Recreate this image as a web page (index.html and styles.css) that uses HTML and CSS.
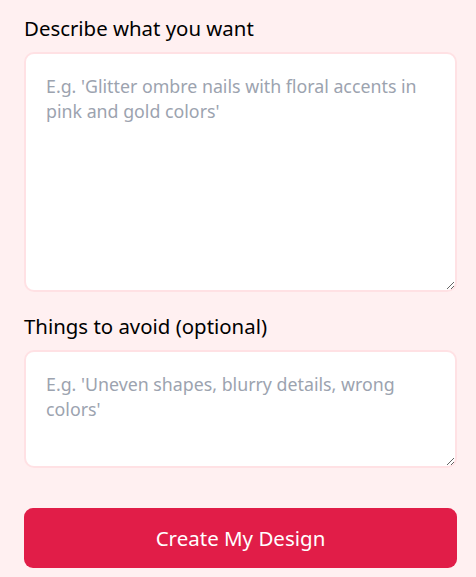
FILE: index.html
```html
<!DOCTYPE html>
<html lang="en">
<head>
<meta charset="utf-8">
<title>Design request</title>
<link rel="stylesheet" href="styles.css">
</head>
<body>
<form class="form">
  <div class="field">
    <label class="label" for="want">Describe what you want</label>
    <textarea id="want" class="input input-tall" placeholder="E.g. 'Glitter ombre nails with floral accents in pink and gold colors'"></textarea>
  </div>
  <div class="field">
    <label class="label" for="avoid">Things to avoid (optional)</label>
    <textarea id="avoid" class="input input-short" placeholder="E.g. 'Uneven shapes, blurry details, wrong colors'"></textarea>
  </div>
  <button type="button" class="submit">Create My Design</button>
</form>
</body>
</html>
```

FILE: styles.css
```css
html, body {
  margin: 0;
  padding: 0;
  background: #fff0f1;
}
body {
  font-family: "Noto Sans", "Open Sans", sans-serif;
  color: #000;
}
.form {
  display: flex;
  flex-direction: column;
  padding: 14px 19px 0 24px;
}
.field {
  display: flex;
  flex-direction: column;
  gap: 10px;
  margin-bottom: 20px;
}
.field + .field {
  margin-bottom: 40px;
}
.label {
  font-size: 20.4px;
  line-height: 28px;
}
.input {
  display: block;
  box-sizing: border-box;
  width: 100%;
  margin: 0;
  border: 2px solid #ffe1e4;
  border-radius: 10px;
  background: #fff;
  padding: 20px 20px 16px;
  font-family: inherit;
  font-size: 17.8px;
  line-height: 25px;
  color: #111;
  outline: none;
  resize: vertical;
}
.input::placeholder {
  color: #9ca3af;
}
.input-tall {
  height: 240px;
}
.input-short {
  height: 118px;
}
.submit {
  box-sizing: border-box;
  height: 60px;
  border: none;
  border-radius: 9px;
  background: #e11d48;
  color: #fff;
  font-family: inherit;
  font-size: 20.5px;
  cursor: pointer;
}
```
